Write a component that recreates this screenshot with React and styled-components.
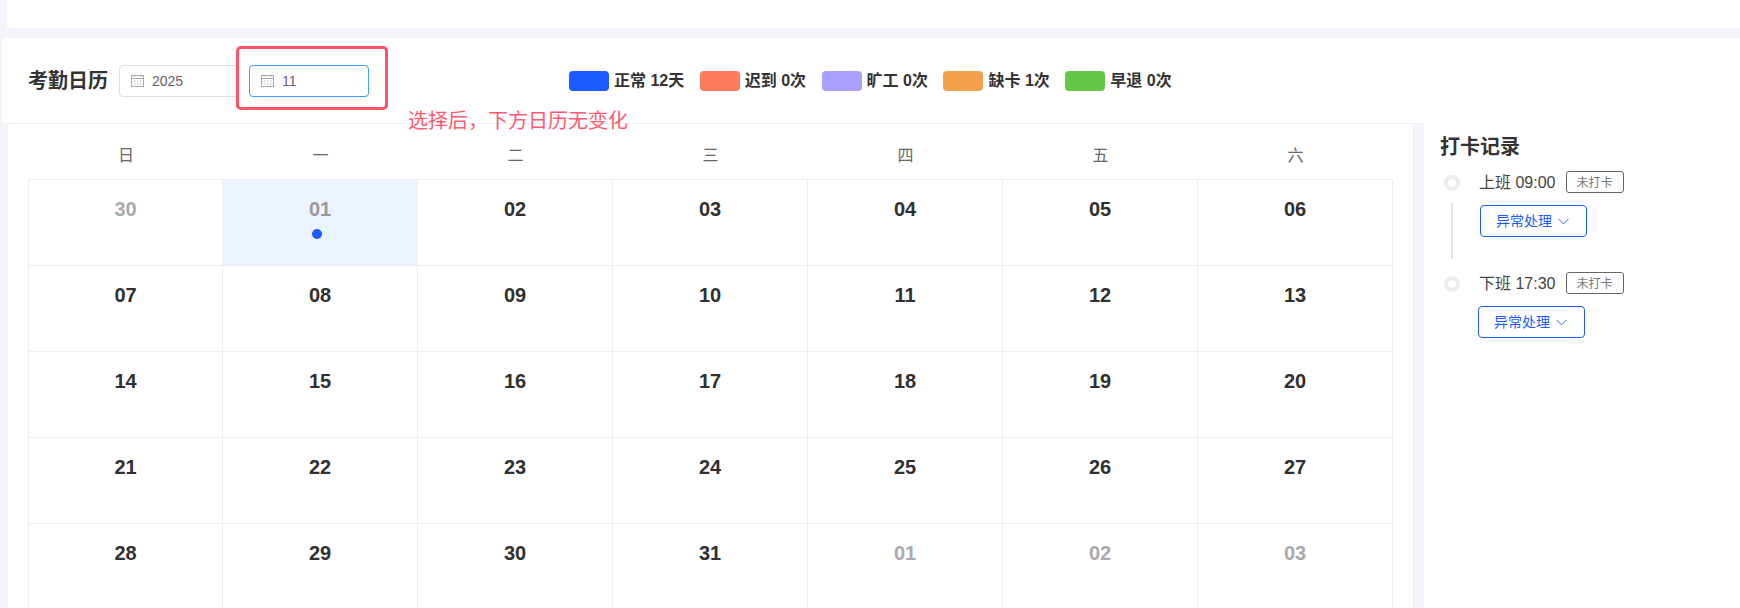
import React from "react";
import styled, { createGlobalStyle } from "styled-components";
import { ChevronDown } from "lucide-react";

const FONT = `"Liberation Sans", "Noto Sans CJK SC", sans-serif`;
const COLUMNS = "194px repeat(6, 195px)";

const Global = createGlobalStyle`
  html, body { margin: 0; padding: 0; height: 608px; overflow: hidden; background: #f3f5fa; }
  * { box-sizing: border-box; }
  body { font-family: ${FONT}; color: #333; }
`;

const Page = styled.div`
  width: 1740px;
  height: 608px;
  overflow: hidden;
  display: flex;
  flex-direction: column;
`;
const TopBar = styled.div`
  height: 28px;
  margin-left: 7px;
  background: #fff;
  flex: none;
`;
const Header = styled.header`
  position: relative;
  height: 85px;
  margin: 10px 0 0 2px;
  padding-left: 26px;
  background: #fff;
  display: flex;
  align-items: center;
  flex: none;
`;
const Title = styled.h1`
  margin: 0 11px 0 0;
  font-size: 20px;
  font-weight: 700;
  line-height: 28px;
  color: #333;
`;
const DateInput = styled.div`
  width: 120px;
  height: 32px;
  margin-left: ${(p) => p.$offset || 0}px;
  padding-left: 11px;
  display: flex;
  align-items: center;
  gap: 8px;
  background: #fff;
  border: 1px solid ${(p) => (p.$focused ? "#409eff" : "#dcdfe6")};
  border-radius: 4px;
  font-size: 14px;
  color: #666;
`;
const Legend = styled.div`
  display: flex;
  align-items: center;
  gap: 15.5px;
  margin-left: 200px;
`;
const LegendItem = styled.div`
  display: flex;
  align-items: center;
  gap: 5px;
  font-size: 16px;
  font-weight: 700;
  color: #333;
  white-space: nowrap;
`;
const LegendLabel = styled.span`
  padding-bottom: 3px;
`;
const Swatch = styled.span`
  width: 40px;
  height: 20px;
  border-radius: 4px;
  background: ${(p) => p.$color};
`;
const Highlight = styled.div`
  position: absolute;
  left: 234px;
  top: 8px;
  width: 152px;
  height: 64px;
  border: 3px solid #ff5266;
  border-radius: 5px;
  pointer-events: none;
`;
const Note = styled.div`
  position: absolute;
  left: 406px;
  top: 69px;
  font-size: 20px;
  line-height: 28px;
  color: #ff5a6e;
  white-space: nowrap;
  z-index: 2;
`;
const Body = styled.div`
  flex: 1;
  display: flex;
  min-height: 0;
`;
const CalendarPanel = styled.section`
  width: 1406px;
  margin-left: 8px;
  padding-left: 20px;
  background: #fff;
  border-top: 1px solid #eceef5;
  border-right: 1px solid #eceef5;
  flex: none;
`;
const Weekdays = styled.div`
  height: 55px;
  padding: 5px 0 0 1px;
  display: grid;
  grid-template-columns: ${COLUMNS};
  align-items: center;
`;
const Weekday = styled.div`
  text-align: center;
  font-size: 16px;
  color: #666;
`;
const Grid = styled.div`
  width: fit-content;
  display: grid;
  grid-template-columns: ${COLUMNS};
  grid-auto-rows: 86px;
  border-top: 1px solid #eceef5;
  border-left: 1px solid #eceef5;
`;
const Cell = styled.div`
  padding-top: 16px;
  text-align: center;
  border-right: 1px solid #eceef5;
  border-bottom: 1px solid #eceef5;
  background: ${(p) => (p.$active ? "#ebf3fe" : "#fff")};
`;
const DayNumber = styled.div`
  font-size: 20px;
  font-weight: 700;
  line-height: 26px;
  color: ${(p) => (p.$muted ? "#a9a9ae" : p.$active ? "#999" : "#303030")};
`;
const StatusDot = styled.span`
  display: block;
  width: 10px;
  height: 10px;
  margin: 7px auto 0;
  transform: translateX(-3px);
  border-radius: 50%;
  background: #1a5cff;
`;
const Gutter = styled.div`
  width: 10px;
  flex: none;
`;
const RecordPanel = styled.aside`
  flex: 1;
  padding: 9px 0 0 16px;
  background: #fff;
`;
const RecordTitle = styled.h2`
  margin: 0 0 10px;
  font-size: 20px;
  font-weight: 700;
  line-height: 30px;
  color: #333;
`;
const RecordRow = styled.div`
  display: flex;
  height: 101px;
`;
const Rail = styled.div`
  width: 40px;
  padding: 3px 0 0 4px;
  display: flex;
  flex-direction: column;
  flex: none;
`;
const RailDot = styled.span`
  width: 16px;
  height: 16px;
  border: 4px solid #ececec;
  border-radius: 50%;
  background: #fff;
`;
const RailLine = styled.span`
  width: 2px;
  height: 56px;
  margin: 12px 0 0 7px;
  background: #e4e4e4;
`;
const RecordBody = styled.div`
  display: flex;
  flex-direction: column;
  align-items: flex-start;
  margin-left: -1px;
`;
const RecordLine = styled.div`
  display: flex;
  align-items: center;
  gap: 10px;
  height: 22px;
  margin-top: -1px;
  font-size: 16px;
  color: #444;
  white-space: nowrap;
`;
const RecordTime = styled.span`
  padding-bottom: 2px;
`;
const Tag = styled.span`
  width: 58px;
  height: 22px;
  padding-bottom: 1px;
  display: flex;
  align-items: center;
  justify-content: center;
  border: 1px solid #666;
  border-radius: 3px;
  font-size: 12px;
  color: #777;
`;
const ActionButton = styled.button`
  width: 107px;
  height: 32px;
  margin: 12px 0 0 ${(p) => p.$shift}px;
  padding: 0 0 0 2px;
  display: flex;
  align-items: center;
  justify-content: center;
  gap: 2px;
  background: #fff;
  border: 1px solid #1a5cff;
  border-radius: 4px;
  font-family: ${FONT};
  font-size: 14px;
  color: #1a5cff;
`;
const ButtonText = styled.span`
  padding-bottom: 2px;
`;

const CalendarIcon = () => (
  <svg width="13" height="13" viewBox="0 0 13 13" fill="none" stroke="#aaa" strokeWidth="1">
    <rect x="0.5" y="1.5" width="12" height="11" />
    <path d="M0.5 4.5h12M3 0.5v2M10 0.5v2" />
    <path d="M3 7h1.5M6 7h1.5M9 7h1.5M3 10h1.5M6 10h1.5M9 10h1.5" stroke="#bbb" />
  </svg>
);

const legend = [
  ["#1a5cff", "正常 12天"],
  ["#fb7b5a", "迟到 0次"],
  ["#a9a0ff", "旷工 0次"],
  ["#f2a24c", "缺卡 1次"],
  ["#62c946", "早退 0次"],
];
const weekdays = ["日", "一", "二", "三", "四", "五", "六"];
const days = [
  "30", "01", "02", "03", "04", "05", "06",
  "07", "08", "09", "10", "11", "12", "13",
  "14", "15", "16", "17", "18", "19", "20",
  "21", "22", "23", "24", "25", "26", "27",
  "28", "29", "30", "31", "01", "02", "03",
];
const isMuted = (i) => i === 0 || i >= 32;

const Action = ({ shift }) => (
  <ActionButton $shift={shift}>
    <ButtonText>异常处理</ButtonText>
    <ChevronDown size={19} strokeWidth={1.2} />
  </ActionButton>
);

export default function App() {
  return (
    <Page>
      <Global />
      <TopBar />
      <Header>
        <Title>考勤日历</Title>
        <DateInput>
          <CalendarIcon />
          2025
        </DateInput>
        <DateInput $focused $offset={10}>
          <CalendarIcon />
          11
        </DateInput>
        <Legend>
          {legend.map(([color, label]) => (
            <LegendItem key={label}>
              <Swatch $color={color} />
              <LegendLabel>{label}</LegendLabel>
            </LegendItem>
          ))}
        </Legend>
        <Highlight />
        <Note>选择后，下方日历无变化</Note>
      </Header>
      <Body>
        <CalendarPanel>
          <Weekdays>
            {weekdays.map((d) => (
              <Weekday key={d}>{d}</Weekday>
            ))}
          </Weekdays>
          <Grid>
            {days.map((d, i) => (
              <Cell key={i} $active={i === 1}>
                <DayNumber $muted={isMuted(i)} $active={i === 1}>
                  {d}
                </DayNumber>
                {i === 1 && <StatusDot />}
              </Cell>
            ))}
          </Grid>
        </CalendarPanel>
        <Gutter />
        <RecordPanel>
          <RecordTitle>打卡记录</RecordTitle>
          <RecordRow>
            <Rail>
              <RailDot />
              <RailLine />
            </Rail>
            <RecordBody>
              <RecordLine>
                <RecordTime>上班 09:00</RecordTime>
                <Tag>未打卡</Tag>
              </RecordLine>
              <Action shift={1} />
            </RecordBody>
          </RecordRow>
          <RecordRow>
            <Rail>
              <RailDot />
            </Rail>
            <RecordBody>
              <RecordLine>
                <RecordTime>下班 17:30</RecordTime>
                <Tag>未打卡</Tag>
              </RecordLine>
              <Action shift={-1} />
            </RecordBody>
          </RecordRow>
        </RecordPanel>
      </Body>
    </Page>
  );
}
